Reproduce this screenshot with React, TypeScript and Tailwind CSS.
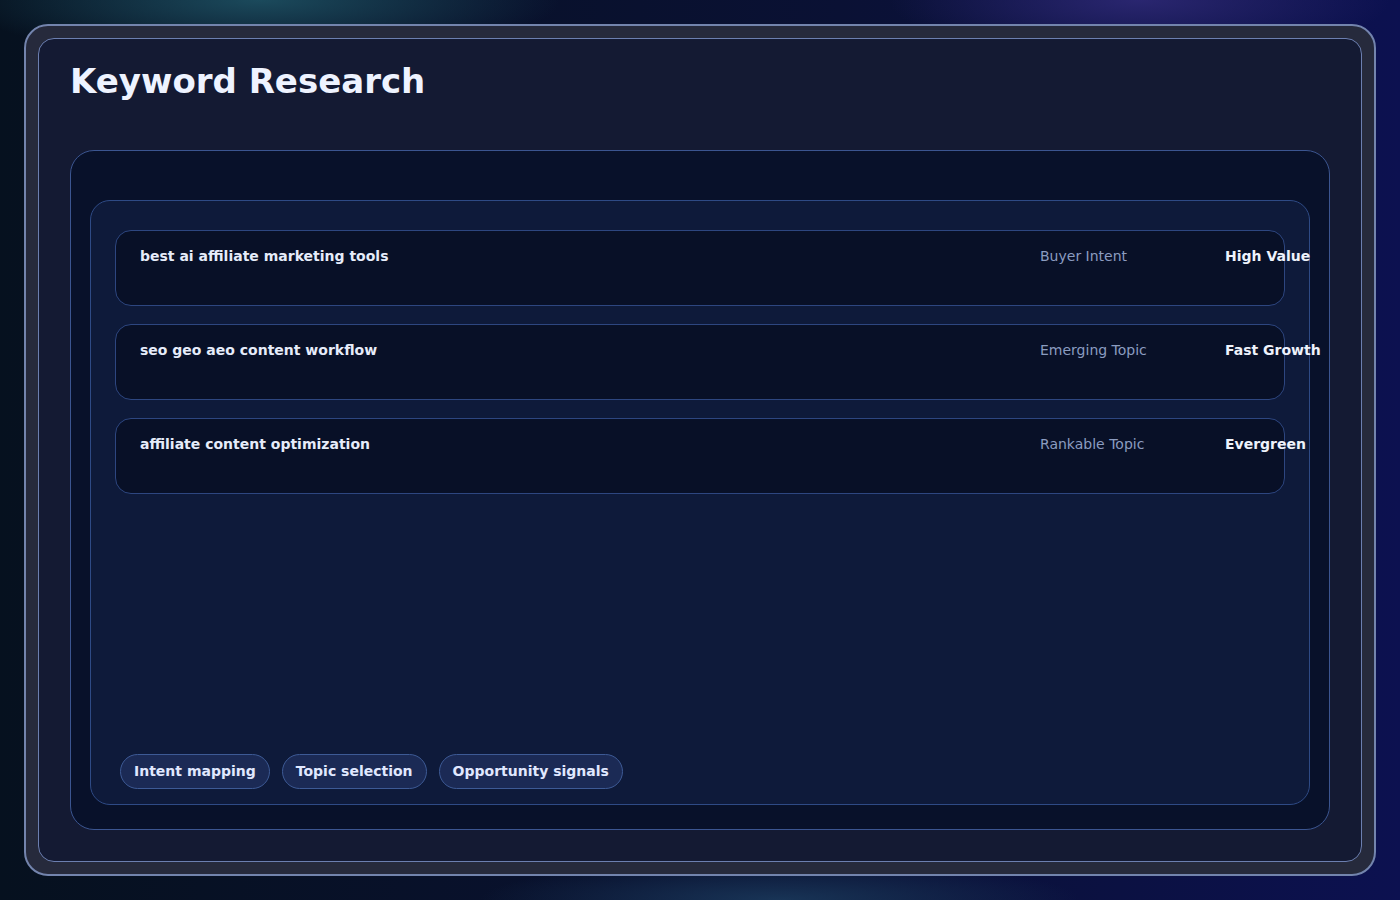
import React from "react";

const rows = [
  ["best ai affiliate marketing tools", "Buyer Intent", "High Value"],
  ["seo geo aeo content workflow", "Emerging Topic", "Fast Growth"],
  ["affiliate content optimization", "Rankable Topic", "Evergreen"],
];

export default function App() {
  return (
    <div
      className="w-[1400px] h-[900px] p-[24px] bg-[radial-gradient(ellipse_300px_60px_at_260px_0px,#1b4a5c,transparent),radial-gradient(ellipse_250px_60px_at_1140px_0px,#2a2670,transparent),radial-gradient(ellipse_300px_40px_at_780px_900px,#183456,transparent),linear-gradient(90deg,#06111f,#0a1134_60%,#0c1150)]"
      style={{ fontFamily: '"DejaVu Sans", sans-serif' }}
    >
      <div className="h-full rounded-[24px] border-2 border-[#7384ad] bg-[#262a3c] p-[12px]">
        <div className="h-full rounded-[16px] border border-[#6c7fb0] bg-[#141a33] px-[31px] pt-[20px] pb-[31px] flex flex-col">
          <h1 className="text-[34px] leading-[44px] font-bold text-[#eef3ff]">Keyword Research</h1>
          <div className="mt-[47px] flex-1 min-w-0 rounded-[24px] border-[1.5px] border-[#3b5590] bg-[#08112a] pt-[49px] px-[19px] pb-[24px] flex">
            <div className="flex-1 min-w-0 rounded-[20px] border border-[#2e4a85] bg-[#0e1a3a] pt-[29px] px-[24px] pb-[15px] flex flex-col">
              <div className="flex flex-col gap-[18px]">
                {rows.map(([k, l, v]) => (
                  <div key={k} className="h-[76px] min-w-0 rounded-[16px] border border-[#2d4680] bg-[#081027] px-[24px] pt-[16px] grid grid-cols-[900px_185px_0px] text-[14px] leading-[18px]">
                    <span className="font-bold text-[#e6ecfa]">{k}</span>
                    <span className="text-[#8b9cc0]">{l}</span>
                    <span className="font-bold text-[#eef2fb] whitespace-nowrap">{v}</span>
                  </div>
                ))}
              </div>
              <div className="mt-auto flex gap-[12px] pl-[5px]">
                {["Intent mapping", "Topic selection", "Opportunity signals"].map((c) => (
                  <span key={c} className="h-[35px] px-[13px] flex items-center rounded-full border border-[#3d5a95] bg-[#1b2a55] text-[14px] font-bold text-[#e0e8ff]">
                    {c}
                  </span>
                ))}
              </div>
            </div>
          </div>
        </div>
      </div>
    </div>
  );
}
